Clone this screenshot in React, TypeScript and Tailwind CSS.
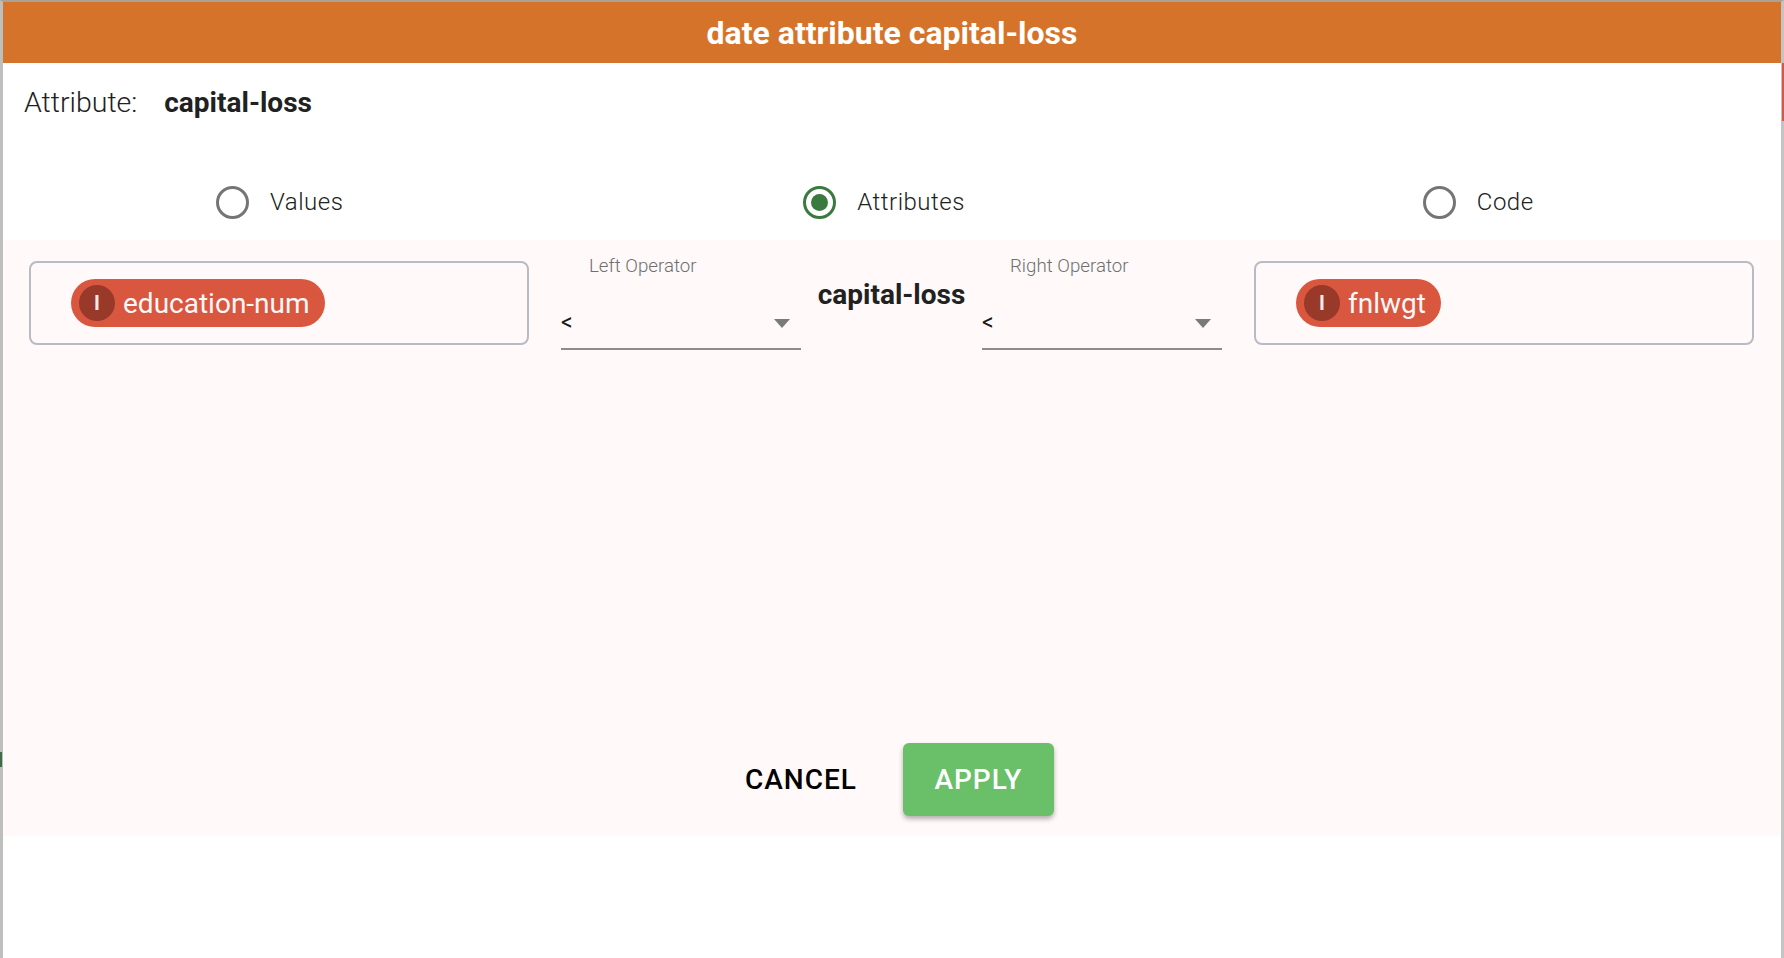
import React from "react";

const RadioOption = ({ label, checked, className }: { label: string; checked?: boolean; className: string }) => (
  <div className={`flex items-center gap-[21px] ${className}`}>
    <span className={`w-[33px] h-[33px] rounded-full border-[3px] flex items-center justify-center ${checked ? "border-[#3b7a3e]" : "border-[#757575]"}`}>
      {checked && <span className="w-[17px] h-[17px] rounded-full bg-[#3b7a3e]" />}
    </span>
    <span className="text-[24px] font-light tracking-[0.5px] text-[#212121]">{label}</span>
  </div>
);

const Chip = ({ label }: { label: string }) => (
  <div className="h-[48px] rounded-full bg-[#d9563f] flex items-center pl-[8px] pr-[15px] gap-[8px]">
    <span className="w-[36px] h-[36px] rounded-full bg-[#98392a] flex items-center justify-center text-[20px] font-bold text-[#fbe9e7]">I</span>
    <span className="text-[28px] text-[#fff8f6] leading-none pt-[1px]">{label}</span>
  </div>
);

const ChipBox = ({ label }: { label: string }) => (
  <div className="w-[500px] h-[84px] mt-[11px] shrink-0 rounded-[8px] border-2 border-[#b8bbc4] flex items-center pl-[40px]">
    <Chip label={label} />
  </div>
);

const OperatorSelect = ({ label }: { label: string }) => (
  <div className="w-[240px] h-[100px] shrink-0 relative border-b-2 border-[#8f8b8b] flex items-end pb-[14px] justify-between">
    <span className="absolute left-[28px] top-[2px] text-[18.7px] font-light text-[#6f6f6f]">{label}</span>
    <span className="text-[23px] text-[#1a1a1a] leading-none">&lt;</span>
    <svg width="16" height="9" viewBox="0 0 16 9" className="mr-[11px] mb-[6px]">
      <path d="M0 0h16L8 9z" fill="#7a7a7a" />
    </svg>
  </div>
);

export default function App() {
  return (
    <div className="relative w-[1784px] h-[958px] bg-white border-t-2 border-t-[#a8a29a] border-l-[3px] border-l-[#bcbfbc] border-r-[3px] border-r-[#c4c4c4] font-['Roboto',sans-serif]">
      {/* bits of the window behind the dialog */}
      <div className="absolute -left-[3px] top-[750px] w-[2px] h-[15px] bg-[#3f6b48]" />
      <div className="absolute -right-[3px] top-[61px] w-[2px] h-[58px] bg-[#cf5a45]" />

      <div className="h-[61px] bg-[#d6732a] flex items-center justify-center text-white text-[32px] font-bold">
        date attribute capital-loss
      </div>

      <div className="h-[77px] flex items-center pl-[21px] pt-[2px]">
        <span className="mt-[2px] text-[28.5px] font-light text-[#212121]">Attribute:</span>
        <span className="ml-[27px] text-[28px] font-bold text-[#212121]">capital-loss</span>
      </div>

      <div className="h-[100px] flex items-start pt-[44px]">
        <RadioOption label="Values" className="ml-[213px]" />
        <RadioOption label="Attributes" checked className="ml-[460px]" />
        <RadioOption label="Code" className="ml-[458px]" />
      </div>

      <div className="h-[596px] bg-[#fff9f9] flex flex-col justify-between pb-[20px]">
        <div className="flex items-start pt-[10px] pl-[26px]">
          <ChipBox label="education-num" />
          <div className="ml-[32px]"><OperatorSelect label="Left Operator" /></div>
          <div className="w-[181px] shrink-0 text-center text-[28px] font-bold text-[#212121] pt-[24px]">capital-loss</div>
          <OperatorSelect label="Right Operator" />
          <div className="ml-[32px]"><ChipBox label="fnlwgt" /></div>
        </div>
        <div className="flex items-center pl-[742px]">
          <button className="text-[28px] font-medium tracking-[1px] text-black">CANCEL</button>
          <button className="ml-[46px] w-[151px] h-[73px] rounded-[6px] bg-[#6abf69] text-white text-[28px] font-medium tracking-[1px] shadow-[0_3px_5px_rgba(0,0,0,0.3)]">APPLY</button>
        </div>
      </div>
    </div>
  );
}
